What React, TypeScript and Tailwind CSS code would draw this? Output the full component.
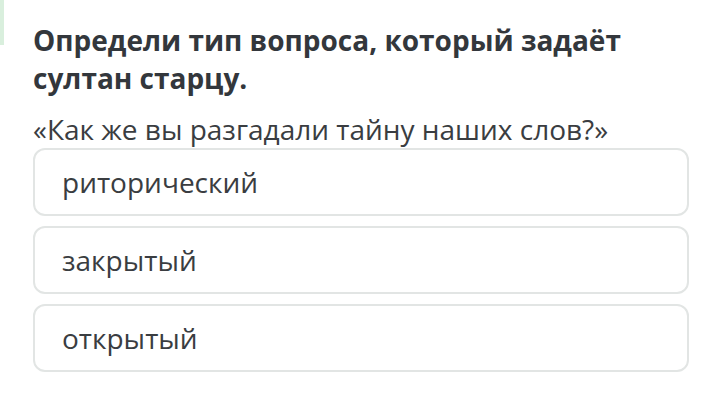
import React from 'react';

const options = ['риторический', 'закрытый', 'открытый'];

const App: React.FC = () => {
    return (
        <div className="relative h-[406px] w-[720px] overflow-hidden bg-white" style={{ fontFamily: '"Open Sans", "Noto Sans", sans-serif' }}>
            <div className="absolute left-0 top-0 h-[45px] w-[4px] bg-[#d9efdd]" />
            <div className="pl-[33px] pr-[31px] pt-[21px]">
                <h1 className="text-[28px] font-bold leading-[38px] text-[#33373c]">
                    Определи тип вопроса, который задаёт султан старцу.
                </h1>
                <p className="mt-[14px] text-[28px] leading-[36px] text-[#3a3d41]">«Как же вы разгадали тайну наших слов?»</p>
                <div className="mt-[1px] flex flex-col gap-[10px]">
                    {options.map((opt) => (
                        <div
                            key={opt}
                            className="flex h-[68px] items-center rounded-[12px] border-2 border-[#e2e5e4] bg-white pl-[27px] text-[28px] text-[#3a3d41]"
                        >
                            {opt}
                        </div>
                    ))}
                </div>
            </div>
        </div>
    );
};

export default App;
